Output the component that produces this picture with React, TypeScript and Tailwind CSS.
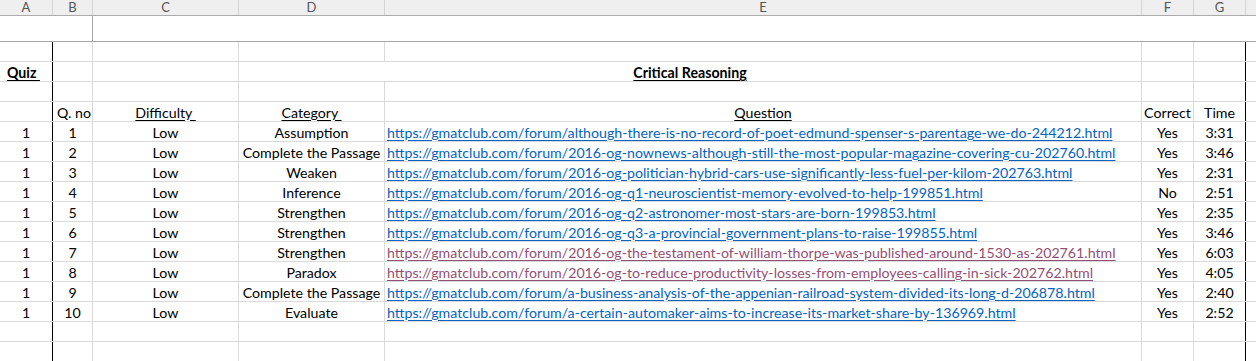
import React from "react";

type Row = {
  quiz: string;
  no: string;
  difficulty: string;
  category: string;
  url: string;
  visited?: boolean;
  correct: string;
  time: string;
};

const rows: Row[] = [
  { quiz: "1", no: "1", difficulty: "Low", category: "Assumption", url: "https://gmatclub.com/forum/although-there-is-no-record-of-poet-edmund-spenser-s-parentage-we-do-244212.html", correct: "Yes", time: "3:31" },
  { quiz: "1", no: "2", difficulty: "Low", category: "Complete the Passage", url: "https://gmatclub.com/forum/2016-og-nownews-although-still-the-most-popular-magazine-covering-cu-202760.html", correct: "Yes", time: "3:46" },
  { quiz: "1", no: "3", difficulty: "Low", category: "Weaken", url: "https://gmatclub.com/forum/2016-og-politician-hybrid-cars-use-significantly-less-fuel-per-kilom-202763.html", correct: "Yes", time: "2:31" },
  { quiz: "1", no: "4", difficulty: "Low", category: "Inference", url: "https://gmatclub.com/forum/2016-og-q1-neuroscientist-memory-evolved-to-help-199851.html", correct: "No", time: "2:51" },
  { quiz: "1", no: "5", difficulty: "Low", category: "Strengthen", url: "https://gmatclub.com/forum/2016-og-q2-astronomer-most-stars-are-born-199853.html", correct: "Yes", time: "2:35" },
  { quiz: "1", no: "6", difficulty: "Low", category: "Strengthen", url: "https://gmatclub.com/forum/2016-og-q3-a-provincial-government-plans-to-raise-199855.html", correct: "Yes", time: "3:46" },
  { quiz: "1", no: "7", difficulty: "Low", category: "Strengthen", url: "https://gmatclub.com/forum/2016-og-the-testament-of-william-thorpe-was-published-around-1530-as-202761.html", visited: true, correct: "Yes", time: "6:03" },
  { quiz: "1", no: "8", difficulty: "Low", category: "Paradox", url: "https://gmatclub.com/forum/2016-og-to-reduce-productivity-losses-from-employees-calling-in-sick-202762.html", visited: true, correct: "Yes", time: "4:05" },
  { quiz: "1", no: "9", difficulty: "Low", category: "Complete the Passage", url: "https://gmatclub.com/forum/a-business-analysis-of-the-appenian-railroad-system-divided-its-long-d-206878.html", correct: "Yes", time: "2:40" },
  { quiz: "1", no: "10", difficulty: "Low", category: "Evaluate", url: "https://gmatclub.com/forum/a-certain-automaker-aims-to-increase-its-market-share-by-136969.html", correct: "Yes", time: "2:52" },
];

const letters = [
  { l: "A", w: "w-[53px]" },
  { l: "B", w: "w-[40px]" },
  { l: "C", w: "w-[146px]" },
  { l: "D", w: "w-[146px]" },
  { l: "E", w: "w-[757px]" },
  { l: "F", w: "w-[52px]" },
  { l: "G", w: "w-[52px]" },
];

const cell = "h-full shrink-0 flex items-end pb-[1px] border-r border-[#dadada] whitespace-nowrap overflow-hidden";

function EmptyRow() {
  return (
    <div className="flex h-[20px] border-b border-[#dadada]">
      <div className={`${cell} w-[53px] border-black`} />
      <div className={`${cell} w-[40px] border-[#a6a6a6]`} />
      <div className={`${cell} w-[146px]`} />
      <div className={`${cell} w-[146px]`} />
      <div className={`${cell} w-[757px]`} />
      <div className={`${cell} w-[52px]`} />
      <div className={`${cell} w-[52px] border-black`} />
      <div className="flex-1" />
    </div>
  );
}

export default function App() {
  return (
    <div className="w-[1256px] h-[361px] overflow-hidden bg-white text-[14.2px] leading-none text-black" style={{ fontFamily: "Lato, 'Liberation Sans', sans-serif" }}>
      {/* column letters */}
      <div className="flex h-[16px] bg-[#efefef] border-b border-[#ababab] text-[13px] text-[#555]">
        {letters.map((c) => (
          <div key={c.l} className={`${c.w} shrink-0 flex items-center justify-center border-r border-[#d4d4d4]`}>
            {c.l}
          </div>
        ))}
        <div className="flex-1" />
      </div>

      {/* row 1, frozen */}
      <div className="flex h-[26px] border-b border-[#a6a6a6]">
        <div className="w-[53px] shrink-0" />
        <div className="w-[40px] shrink-0 border-r border-[#a6a6a6]" />
        <div className="flex-1" />
      </div>

      <EmptyRow />

      {/* title row */}
      <div className="flex h-[20px] border-b border-[#dadada]">
        <div className={`${cell} w-[53px] border-black pl-[7px] font-bold`}>
          <span className="underline underline-offset-2">Quiz&nbsp;</span>
        </div>
        <div className={`${cell} w-[40px] border-[#a6a6a6]`} />
        <div className={`${cell} w-[146px]`} />
        <div className={`${cell} w-[903px] justify-center font-bold`}>
          <span className="underline underline-offset-2">Critical Reasoning</span>
        </div>
        <div className={`${cell} w-[52px]`} />
        <div className={`${cell} w-[52px] border-black`} />
        <div className="flex-1" />
      </div>

      <EmptyRow />

      {/* header row */}
      <div className="flex h-[20px] border-b border-[#dadada]">
        <div className={`${cell} w-[53px] border-black`} />
        <div className={`${cell} w-[40px] border-[#a6a6a6] pl-[4px]`}>Q. no</div>
        <div className={`${cell} w-[146px] justify-center`}>
          <span className="underline underline-offset-2">Difficulty&nbsp;</span>
        </div>
        <div className={`${cell} w-[146px] justify-center`}>
          <span className="underline underline-offset-2">Category&nbsp;</span>
        </div>
        <div className={`${cell} w-[757px] justify-center`}>
          <span className="underline underline-offset-2">Question</span>
        </div>
        <div className={`${cell} w-[52px] justify-center`}>Correct</div>
        <div className={`${cell} w-[52px] border-black justify-center`}>Time</div>
        <div className="flex-1" />
      </div>

      {rows.map((r) => (
        <div key={r.no} className="flex h-[20px] border-b border-[#dadada]">
          <div className={`${cell} w-[53px] border-black justify-center`}>{r.quiz}</div>
          <div className={`${cell} w-[40px] border-[#a6a6a6] justify-center`}>{r.no}</div>
          <div className={`${cell} w-[146px] justify-center`}>{r.difficulty}</div>
          <div className={`${cell} w-[146px] justify-center`}>{r.category}</div>
          <div className={`${cell} w-[757px] pl-[2px]`}>
            <span className={`underline underline-offset-2 ${r.visited ? "text-[#954f72]" : "text-[#0563c1]"}`}>{r.url}</span>
          </div>
          <div className={`${cell} w-[52px] justify-center`}>{r.correct}</div>
          <div className={`${cell} w-[52px] border-black justify-center`}>{r.time}</div>
          <div className="flex-1" />
        </div>
      ))}

      <EmptyRow />
      <EmptyRow />
    </div>
  );
}
